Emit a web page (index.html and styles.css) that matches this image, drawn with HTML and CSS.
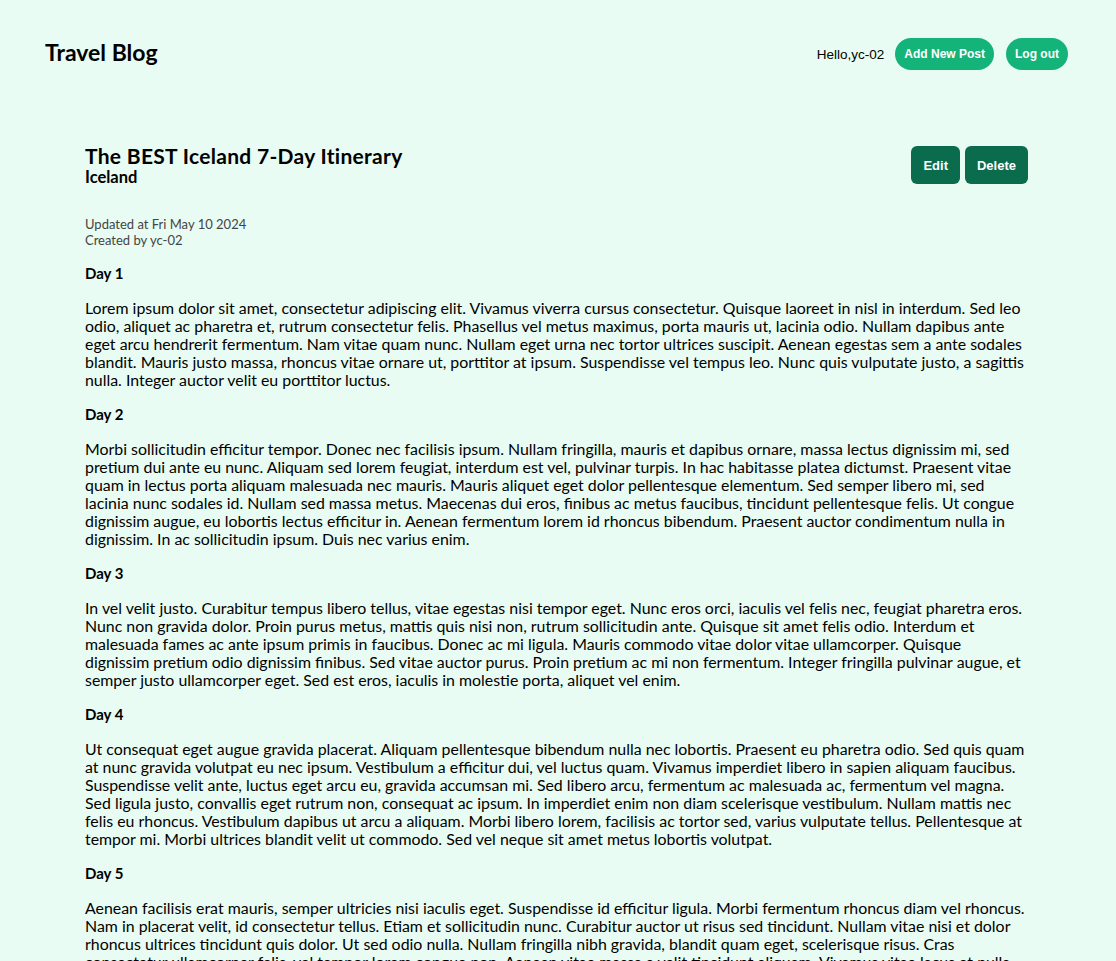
FILE: index.html
```html
<!DOCTYPE html>
<html lang="en">
<head>
<meta charset="utf-8">
<title>Travel Blog</title>
<link rel="stylesheet" href="styles.css">
</head>
<body>
<header class="nav">
  <div class="brand">Travel Blog</div>
  <div class="nav-right">
    <span class="hello">Hello,yc-02</span>
    <button class="pill">Add New Post</button>
    <button class="pill">Log out</button>
  </div>
</header>
<main class="post">
  <div class="post-head">
    <div>
      <h1 class="title">The BEST Iceland 7-Day Itinerary</h1>
      <div class="country">Iceland</div>
    </div>
    <div class="actions">
      <button class="btn">Edit</button>
      <button class="btn">Delete</button>
    </div>
  </div>
  <div class="meta">
    <div>Updated at Fri May 10 2024</div>
    <div>Created by yc-02</div>
  </div>
  <section class="day">
    <h2>Day 1</h2>
    <p>Lorem ipsum dolor sit amet, consectetur adipiscing elit. Vivamus viverra cursus consectetur. Quisque laoreet in nisl in interdum. Sed leo odio, aliquet ac pharetra et, rutrum consectetur felis. Phasellus vel metus maximus, porta mauris ut, lacinia odio. Nullam dapibus ante eget arcu hendrerit fermentum. Nam vitae quam nunc. Nullam eget urna nec tortor ultrices suscipit. Aenean egestas sem a ante sodales blandit. Mauris justo massa, rhoncus vitae ornare ut, porttitor at ipsum. Suspendisse vel tempus leo. Nunc quis vulputate justo, a sagittis nulla. Integer auctor velit eu porttitor luctus.</p>
  </section>
  <section class="day">
    <h2>Day 2</h2>
    <p>Morbi sollicitudin efficitur tempor. Donec nec facilisis ipsum. Nullam fringilla, mauris et dapibus ornare, massa lectus dignissim mi, sed pretium dui ante eu nunc. Aliquam sed lorem feugiat, interdum est vel, pulvinar turpis. In hac habitasse platea dictumst. Praesent vitae quam in lectus porta aliquam malesuada nec mauris. Mauris aliquet eget dolor pellentesque elementum. Sed semper libero mi, sed lacinia nunc sodales id. Nullam sed massa metus. Maecenas dui eros, finibus ac metus faucibus, tincidunt pellentesque felis. Ut congue dignissim augue, eu lobortis lectus efficitur in. Aenean fermentum lorem id rhoncus bibendum. Praesent auctor condimentum nulla in dignissim. In ac sollicitudin ipsum. Duis nec varius enim.</p>
  </section>
  <section class="day">
    <h2>Day 3</h2>
    <p>In vel velit justo. Curabitur tempus libero tellus, vitae egestas nisi tempor eget. Nunc eros orci, iaculis vel felis nec, feugiat pharetra eros. Nunc non gravida dolor. Proin purus metus, mattis quis nisi non, rutrum sollicitudin ante. Quisque sit amet felis odio. Interdum et malesuada fames ac ante ipsum primis in faucibus. Donec ac mi ligula. Mauris commodo vitae dolor vitae ullamcorper. Quisque dignissim pretium odio dignissim finibus. Sed vitae auctor purus. Proin pretium ac mi non fermentum. Integer fringilla pulvinar augue, et semper justo ullamcorper eget. Sed est eros, iaculis in molestie porta, aliquet vel enim.</p>
  </section>
  <section class="day">
    <h2>Day 4</h2>
    <p>Ut consequat eget augue gravida placerat. Aliquam pellentesque bibendum nulla nec lobortis. Praesent eu pharetra odio. Sed quis quam at nunc gravida volutpat eu nec ipsum. Vestibulum a efficitur dui, vel luctus quam. Vivamus imperdiet libero in sapien aliquam faucibus. Suspendisse velit ante, luctus eget arcu eu, gravida accumsan mi. Sed libero arcu, fermentum ac malesuada ac, fermentum vel magna. Sed ligula justo, convallis eget rutrum non, consequat ac ipsum. In imperdiet enim non diam scelerisque vestibulum. Nullam mattis nec felis eu rhoncus. Vestibulum dapibus ut arcu a aliquam. Morbi libero lorem, facilisis ac tortor sed, varius vulputate tellus. Pellentesque at tempor mi. Morbi ultrices blandit velit ut commodo. Sed vel neque sit amet metus lobortis volutpat.</p>
  </section>
  <section class="day">
    <h2>Day 5</h2>
    <p>Aenean facilisis erat mauris, semper ultricies nisi iaculis eget. Suspendisse id efficitur ligula. Morbi fermentum rhoncus diam vel rhoncus. Nam in placerat velit, id consectetur tellus. Etiam et sollicitudin nunc. Curabitur auctor ut risus sed tincidunt. Nullam vitae nisi et dolor rhoncus ultrices tincidunt quis dolor. Ut sed odio nulla. Nullam fringilla nibh gravida, blandit quam eget, scelerisque risus. Cras consectetur ullamcorper felis, vel tempor lorem congue non. Aenean vitae massa a velit tincidunt aliquam. Vivamus vitae lacus et nulla semper sagittis.</p>
  </section>
</main>
</body>
</html>
```
FILE: styles.css
```css
* { box-sizing: border-box; }
html, body {
  margin: 0;
  background: #e8fcf3;
  color: #000;
  font-family: Lato, "Noto Sans", sans-serif;
}
.nav {
  display: flex;
  align-items: center;
  justify-content: space-between;
  padding: 38px 48px 0 45px;
  height: 70px;
}
.brand {
  font-size: 23px;
  font-weight: 700;
  line-height: 28px;
  margin-top: -4px;
}
.nav-right {
  display: flex;
  align-items: center;
  gap: 12px;
}
.hello {
  font-family: "Liberation Sans", Arial, sans-serif;
  font-size: 13.5px;
  margin-right: -1px;
}
.pill {
  background: #14b37a;
  color: #fff;
  border: none;
  border-radius: 16px;
  height: 32px;
  padding: 0 9px;
  font-family: "Liberation Sans", Arial, sans-serif;
  font-weight: 700;
  font-size: 12px;
}
.post {
  padding: 75px 88px 40px 85px;
}
.post-head {
  display: flex;
  justify-content: space-between;
  align-items: flex-start;
}
.title {
  margin: 0;
  font-size: 21px;
  letter-spacing: 0.3px;
  font-weight: 700;
  line-height: 22px;
}
.country {
  font-size: 16.5px;
  font-weight: 700;
  line-height: 20px;
}
.actions {
  display: flex;
  gap: 5px;
  margin-top: 1px;
}
.btn {
  background: #0b6b4d;
  color: #fff;
  border: none;
  border-radius: 6px;
  height: 38px;
  padding: 0 12px;
  font-family: "Liberation Sans", Arial, sans-serif;
  font-weight: 700;
  font-size: 13px;
}
.meta {
  margin-top: 29px;
  font-size: 13px;
  line-height: 16px;
  color: #444;
}
.day h2 {
  margin: 15px 0 0;
  font-size: 15px;
  font-weight: 700;
  line-height: 20px;
}
.day p {
  margin: 16px 0 0;
  font-size: 15.9px;
  line-height: 18px;
}
```
